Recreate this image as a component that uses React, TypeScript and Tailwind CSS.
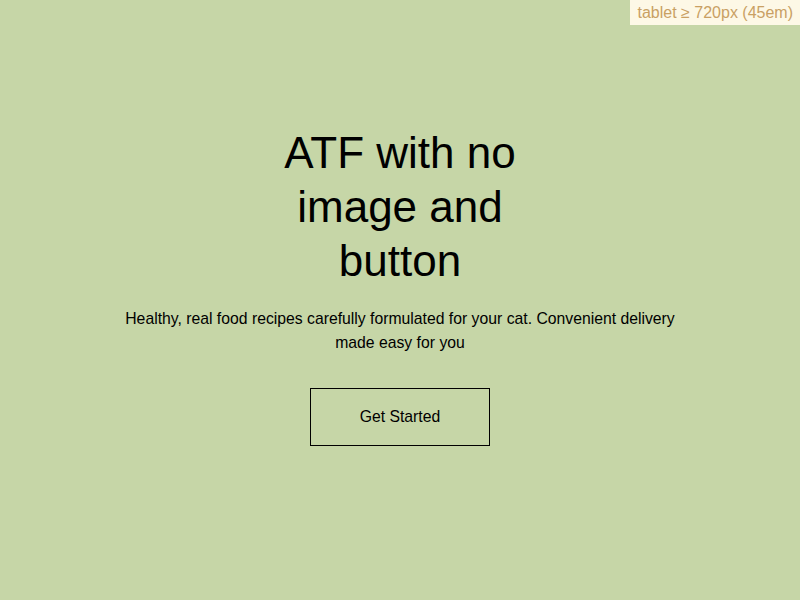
export default function App() {
  return (
    <main
      className="relative min-h-[600px] w-full bg-[#c6d6a7] text-black"
      style={{ fontFamily: '"Liberation Sans", Arial, sans-serif' }}
    >
      {/* Breakpoint badge */}
      <div className="absolute right-0 top-0 bg-[#fdf8e6] px-[7px] py-[2px] text-[16px] leading-[21px] text-[#c9a063]">
        tablet ≥ 720px (45em)
      </div>

      <section className="flex flex-col items-center px-6 pt-[126px] text-center">
        <h1 className="max-w-[260px] text-[44px] font-normal leading-[54px]">
          ATF with no image and button
        </h1>
        <p className="mt-[19px] max-w-[570px] text-[15.75px] leading-[24px]">
          Healthy, real food recipes carefully formulated for your cat. Convenient
          delivery made easy for you
        </p>
        <button className="mt-[33px] h-[58px] w-[180px] border border-black text-[15.75px]">
          Get Started
        </button>
      </section>
    </main>
  );
}
